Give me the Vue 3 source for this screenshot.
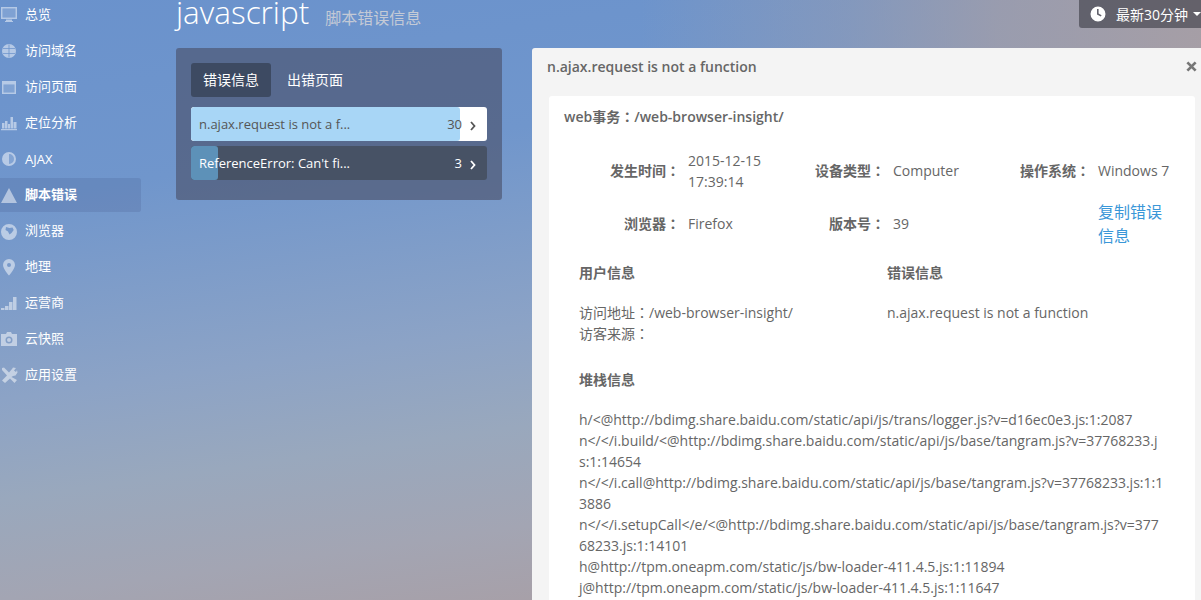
<script setup>
const nav = [
  { label: '总览', d: 'M1 0h16v12H1zM2.500 1.500v9h13v-9zM6 12.500h6V14h1v1H5v-1h1z', inner: 'M2.500 1.500h13v9h-13z' },
  { label: '访问域名', d: 'M9 1a7 7 0 1 0 0 14A7 7 0 0 0 9 1zM8.600 1.500h.8v13h-.8zM3 5h5.600v.7H3zM9.400 5H15v.7H9.400zM3 10.300h5.600v.7H3zM9.400 10.300H15v.7H9.400z' },
  { label: '访问页面', d: 'M2 2h14v13H2zM3.500 5.500v8h11v-8z', inner: 'M3.500 5.500h11v8h-11z' },
  { label: '定位分析', d: 'M1 14h16v1.200H1zM2 8h2.500v5.500H2zM5 6h2.500v7.500H5zM8 9h2v4.500H8zM10.500 2h2.500v11.500h-2.500zM13.500 7h3v6.500h-3z' },
  { label: 'AJAX', d: 'M9 1a7 7 0 1 0 0 14A7 7 0 0 0 9 1zM9 3a5 5 0 0 1 0 10z', inner: 'M9 3a5 5 0 0 1 0 10z', latin: true },
  { label: '脚本错误', d: 'M9 1l8 15H1z', active: true },
  { label: '浏览器', d: 'M9 1a8 8 0 1 0 0 16A8 8 0 0 0 9 1zM6 4l3.500 1 3-.5 1.200 2.500-2.200 3-2 1.500L8 8.500 5.500 7z' },
  { label: '地理', d: 'M9 0a6 6 0 0 0-6 6c0 4 6 10.500 6 10.500S15 10 15 6a6 6 0 0 0-6-6zM9 4a2 2 0 1 1 0 4 2 2 0 0 1 0-4z' },
  { label: '运营商', d: 'M1 13h3.500v2H1zM5 11h3.500v4H5zM9 7h3.500v8H9zM13 2h3.500v13H13z' },
  { label: '云快照', d: 'M6 3l1-2h4l1 2h5v12H1V3zM9 5.500a3.500 3.500 0 1 0 0 7 3.500 3.500 0 0 0 0-7zM9 7a2 2 0 1 1 0 4 2 2 0 0 1 0-4z' },
  { label: '应用设置', d: 'M2 1l2-.5 5 5 3-3.500 1-1.500 3 .5-2 2.500 2 1.500 1-2 .5 2.500-2 3-2.500.5-1.500 1L17 13l-2.500 3-4.500-4.500L5 16l-3-2.500L7 8.500 2 3z' },
]
const errors = [
  { text: 'n.ajax.request is not a f...', count: 30, width: '91%', light: true },
  { text: "ReferenceError: Can't fi...", count: 3, width: '9%', light: false },
]
const stack = [
  'h/<@http://bdimg.share.baidu.com/static/api/js/trans/logger.js?v=d16ec0e3.js:1:2087',
  'n</</i.build/<@http://bdimg.share.baidu.com/static/api/js/base/tangram.js?v=37768233.js:1:14654',
  'n</</i.call@http://bdimg.share.baidu.com/static/api/js/base/tangram.js?v=37768233.js:1:13886',
  'n</</i.setupCall</e/<@http://bdimg.share.baidu.com/static/api/js/base/tangram.js?v=37768233.js:1:14101',
  'h@http://tpm.oneapm.com/static/js/bw-loader-411.4.5.js:1:11894',
  'j@http://tpm.oneapm.com/static/js/bw-loader-411.4.5.js:1:11647',
]
</script>

<template>
  <div class="page">
    <nav class="side">
      <a v-for="item in nav" :key="item.label" class="nav-item" :class="{ active: item.active }">
        <svg class="nav-icon" viewBox="0 0 18 17" width="18" height="17">
          <path :d="item.d" fill-rule="evenodd" />
          <path v-if="item.inner" :d="item.inner" class="inner" />
        </svg>
        <span :class="{ cjk: !item.latin }">{{ item.label }}</span>
      </a>
    </nav>
    <main class="main">
      <header class="head">
        <h1 class="title">javascript</h1>
        <span class="sub">脚本错误信息</span>
        <div class="time">
          <svg viewBox="0 0 16 16" width="16" height="16">
            <path fill="#fff" fill-rule="evenodd" d="M8 .5a7.500 7.500 0 1 0 0 15 7.500 7.500 0 0 0 0-15zM7 3h1.600v4.600l3 1.700-.8 1.300L7 8.500z" />
          </svg>
          <span>最新30分钟</span>
          <i class="caret"></i>
        </div>
      </header>
      <div class="body">
        <section class="list-panel">
          <div class="tabs">
            <a class="tab on">错误信息</a>
            <a class="tab">出错页面</a>
          </div>
          <div class="rows">
            <div v-for="err in errors" :key="err.text" class="row" :class="{ light: err.light }">
              <div class="fill" :style="{ width: err.width }"></div>
              <span class="row-text">{{ err.text }}</span>
              <span class="row-count">{{ err.count }}</span>
              <svg class="chev" viewBox="0 0 6 10" width="6" height="10">
                <path d="M1 1l3.500 4L1 9" fill="none" stroke="currentColor" stroke-width="1.800" />
              </svg>
            </div>
          </div>
        </section>
        <section class="detail">
          <div class="detail-head">
            <span>n.ajax.request is not a function</span>
            <svg class="close" viewBox="0 0 12 12" width="11" height="11">
              <path d="M1.500 1.500l9 9M10.500 1.500l-9 9" stroke="#777" stroke-width="3" fill="none" />
            </svg>
          </div>
          <div class="card">
            <div class="card-title">web事务<i class="c">：</i>/web-browser-insight/</div>
            <div class="facts">
              <span class="k">发生时间<i class="c">：</i></span><span class="v date">2015-12-15<br />17:39:14</span>
              <span class="k">设备类型<i class="c">：</i></span><span class="v">Computer</span>
              <span class="k">操作系统<i class="c">：</i></span><span class="v">Windows 7</span>
              <span class="k">浏览器<i class="c">：</i></span><span class="v">Firefox</span>
              <span class="k">版本号<i class="c">：</i></span><span class="v">39</span>
              <span></span><a class="copy">复制错误信息</a>
            </div>
            <div class="two">
              <div>
                <h4>用户信息</h4>
                <p>访问地址<i class="c">：</i>/web-browser-insight/<br />访客来源<i class="c">：</i></p>
              </div>
              <div>
                <h4>错误信息</h4>
                <p>n.ajax.request is not a function</p>
              </div>
            </div>
            <div class="stack">
              <h4>堆栈信息</h4>
              <p><template v-for="line in stack" :key="line">{{ line }}<br /></template></p>
            </div>
          </div>
        </section>
      </div>
    </main>
  </div>
</template>

<style>
html, body { margin: 0; overflow: hidden; }
</style>

<style scoped>
.page {
  display: flex;
  height: 600px;
  overflow: hidden;
  font-family: "Open Sans", "Noto Sans CJK SC", sans-serif;
  font-size: 14px;
  color: #666;
  background:
    radial-gradient(circle 650px at 1290px 30px, #ab9fa2 0%, rgba(171, 159, 162, 0.7) 45%, rgba(171, 159, 162, 0.35) 68%, rgba(171, 159, 162, 0) 100%),
    linear-gradient(172deg, #6a92cc 0%, #7096cc 26%, #8ca3c6 52%, #99a8bd 65%, #a3a5b3 78%, #a89fa6 90%);
}
.c {
  font-family: "Noto Sans CJK TC", sans-serif;
  font-style: normal;
}
.side {
  width: 141px;
  flex: none;
  margin-top: -3px;
}
.nav-item {
  display: flex;
  align-items: center;
  gap: 7px;
  height: 36px;
  color: #fff;
  font-size: 13px;
  box-sizing: border-box;
}
.cjk {
  padding-bottom: 3px;
}
.nav-item.active {
  background: rgba(60, 80, 125, 0.18);
  background-clip: padding-box;
  border-block: 1px solid transparent;
  border-radius: 0 3px 3px 0;
  font-weight: 600;
}
.nav-icon {
  flex: none;
  fill: rgba(255, 255, 255, 0.5);
}
.inner {
  fill: rgba(255, 255, 255, 0.14);
}
.main {
  flex: 1;
  min-width: 0;
  padding-left: 35px;
}
.head {
  display: flex;
  align-items: baseline;
  height: 48px;
}
.title {
  margin: -4px 0 0;
  font-size: 31.5px;
  line-height: 32px;
  font-weight: 300;
  color: #fff;
}
.sub {
  margin-left: 16px;
  font-size: 16px;
  color: #c4cad6;
}
.time {
  align-self: flex-start;
  margin-left: auto;
  display: flex;
  align-items: center;
  width: 122px;
  height: 28px;
  box-sizing: border-box;
  padding-left: 11px;
  gap: 10px;
  font-size: 14px;
  color: #fff;
  white-space: nowrap;
  overflow: hidden;
  background: rgba(60, 60, 70, 0.62);
  border-radius: 0 0 0 3px;
}
.caret {
  flex: none;
  margin-left: -5px;
  border: 4px solid transparent;
  border-top-color: #fff;
  border-bottom: 0;
}
.body {
  display: flex;
  align-items: flex-start;
  gap: 30px;
}
.list-panel {
  flex: none;
  width: 326px;
  height: 152px;
  padding: 15px;
  box-sizing: border-box;
  background: rgba(72, 77, 100, 0.6);
  border-radius: 3px;
}
.tabs {
  display: flex;
  gap: 0;
  margin-bottom: 10px;
}
.tab {
  height: 34px;
  line-height: 34px;
  padding: 0 12px;
  margin-right: 4px;
  border-radius: 3px;
  color: #fff;
}
.tab.on {
  background: #3d4a62;
}
.rows {
  display: flex;
  flex-direction: column;
  gap: 5px;
}
.row {
  position: relative;
  display: flex;
  align-items: center;
  height: 34px;
  padding: 0 11px 0 8px;
  border-radius: 3px;
  overflow: hidden;
  font-size: 13px;
  color: #fff;
  background: #475265;
}
.row.light {
  color: #555;
  background: #fff;
}
.fill {
  position: absolute;
  left: 0;
  top: 0;
  bottom: 0;
  background: #5d91b8;
  border-radius: 3px;
}
.row.light .fill {
  background: #a8d6f6;
}
.row-text, .row-count, .chev {
  position: relative;
}
.row-text {
  flex: 1;
}
.chev {
  margin-left: 8px;
  margin-top: 3px;
}
.detail {
  flex: 1;
  min-width: 0;
  height: 600px;
  background: #f4f4f4;
  border-radius: 3px 0 0 0;
  padding: 0 6px 0 17px;
  box-sizing: border-box;
}
.detail-head {
  display: flex;
  align-items: center;
  justify-content: space-between;
  height: 37px;
  margin-bottom: 11px;
  margin-left: -2px;
  font-weight: 600;
  color: #666;
}
.close {
  margin-right: -2px;
}
.card {
  background: #fff;
  border-radius: 3px;
  padding: 10px 15px;
  height: 600px;
  box-sizing: border-box;
}
.card-title {
  font-weight: 600;
  line-height: 21px;
}
.facts {
  display: grid;
  grid-template-columns: 116px 90px 99px 90px 99px 72px;
  column-gap: 8px;
  row-gap: 8px;
  align-items: center;
  margin-top: 22px;
  line-height: 21px;
}
.date {
  margin: 1px 0 -1px;
}
.k {
  text-align: right;
  font-weight: 600;
  white-space: nowrap;
}
.copy {
  font-size: 16px;
  line-height: 24px;
  color: #3a97d8;
  width: 70px;
  margin: 1px 0 -1px;
}
.two {
  display: grid;
  grid-template-columns: 308px 1fr;
  margin-top: 15px;
  padding-left: 15px;
}
h4 {
  margin: 0;
  font-size: 14px;
  font-weight: 600;
  line-height: 21px;
}
p {
  margin: 19px 0 0;
  line-height: 21px;
}
.stack {
  margin-top: 25px;
  padding: 0 0 0 15px;
  width: 585.5px;
}
.stack p {
  word-break: break-all;
}
</style>
